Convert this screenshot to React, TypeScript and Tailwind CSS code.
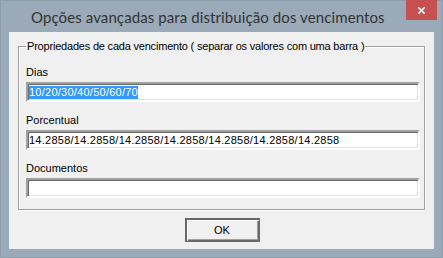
import { X } from "lucide-react";

const fields = [
    { label: "Dias", value: "10/20/30/40/50/60/70", selected: true },
    {
        label: "Porcentual",
        value: "14.2858/14.2858/14.2858/14.2858/14.2858/14.2858/14.2858",
        selected: false,
    },
    { label: "Documentos", value: "", selected: false },
];

export default function App() {
    return (
        <div className="w-[443px] h-[258px] bg-[#9aaab8] border border-[#8c9cab] flex flex-col font-['Liberation_Sans',Arial,sans-serif]">
            {/* Title bar */}
            <div className="h-[31px] flex items-start">
                <div className="flex-1 pl-[30px] pt-[6px] text-[15px] leading-[20px] text-[#333] tracking-[0.1px] whitespace-nowrap overflow-hidden font-['Lato','Noto_Sans',sans-serif]">
                    Opções avançadas para distribuição dos vencimentos
                </div>
                <div className="w-[31px] h-[20px] mr-[5px] -mt-px bg-[#c75050] flex items-center justify-center">
                    <X className="w-[11px] h-[11px] text-white" strokeWidth={3.5} />
                </div>
            </div>

            {/* Client area */}
            <div className="mx-[8px] h-[217px] bg-[#f0f0f0] flex flex-col text-[11px] leading-[13px] text-black">
                {/* Group box */}
                <div className="relative ml-[9px] mt-[14px] w-[407px] h-[164px] border border-[#a0a0a0] shadow-[inset_1px_1px_0_#fff,1px_1px_0_#fff] pt-[19px] pl-[7px] pr-[3px] flex flex-col">
                    <span className="absolute -top-[7px] left-[7px] px-px bg-[#f0f0f0] tracking-[-0.2px] whitespace-nowrap">
                        Propriedades de cada vencimento ( separar os valores com uma barra )
                    </span>
                    {fields.map((f) => (
                        <div key={f.label} className="flex flex-col mb-[12px]">
                            <span className="h-[13px] mb-[3px]">{f.label}</span>
                            <div className="h-[20px] w-[394px] bg-white border-2 border-t-[#a0a0a0] border-l-[#a0a0a0] border-b-white border-r-white shadow-[inset_1px_1px_0_#696969,inset_-1px_-1px_0_#e3e3e3] pl-[1px] pt-px flex items-start tracking-[0.25px] whitespace-nowrap">
                                {f.selected ? (
                                    <span className="bg-[#3399ff] text-white mt-px">{f.value}</span>
                                ) : (
                                    <span className="mt-px">{f.value}</span>
                                )}
                            </div>
                        </div>
                    ))}
                </div>

                {/* Button */}
                <div className="flex justify-center mt-[8px]">
                    <button className="w-[75px] h-[24px] border border-[#696969] shadow-[inset_1px_1px_0_#696969,inset_2px_2px_0_#fff,inset_-1px_-1px_0_#696969,inset_-2px_-2px_0_#a0a0a0] bg-[#f0f0f0] text-[11px] leading-[13px] ml-[1px]">
                        OK
                    </button>
                </div>
            </div>
        </div>
    );
}
